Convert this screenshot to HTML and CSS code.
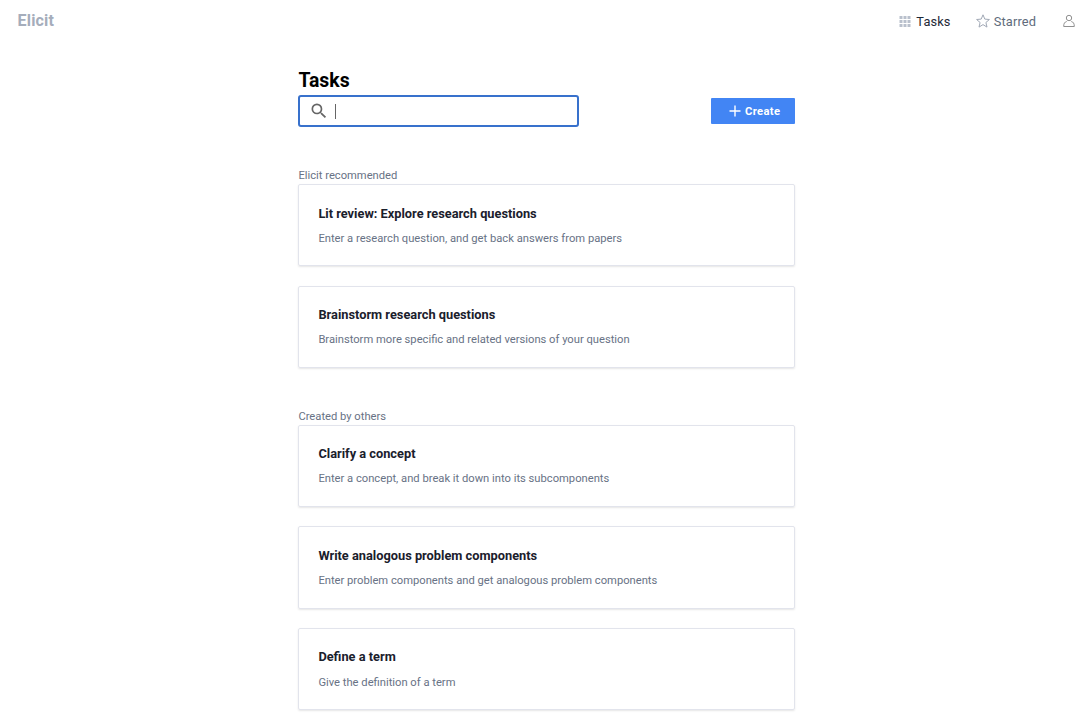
FILE: index.html
```html
<!DOCTYPE html>
<html lang="en">
<head>
<meta charset="utf-8">
<title>Elicit</title>
<link rel="stylesheet" href="styles.css">
</head>
<body>
<header class="topbar">
  <a class="brand">Elicit</a>
  <nav class="nav">
    <a class="nav-item active"><svg class="grid-icon" viewBox="0 0 12 12"><path d="M.5 1h3v3h-3zM4.500 1h3v3h-3zM8.500 1h3v3h-3zM.5 5h3v3h-3zM4.500 5h3v3h-3zM8.500 5h3v3h-3zM.5 9h3v3h-3zM4.500 9h3v3h-3zM8.500 9h3v3h-3z"/></svg><span>Tasks</span></a>
    <a class="nav-item starred"><svg class="star-icon" viewBox="0 0 14 14"><path d="M7 .8l1.800 4.300 4.600.4-3.500 3 1.100 4.600L7 10.600l-4 2.500 1.100-4.600-3.500-3 4.600-.4z"/></svg><span>Starred</span></a>
    <a class="nav-item user"><svg class="user-icon" viewBox="0 0 12 14"><circle cx="6" cy="4" r="2.700"/><path d="M3.700 7.500C1.600 8 .7 9.500.7 12.500h10.600c0-3-.9-4.500-3-5"/></svg></a>
  </nav>
</header>
<main class="content">
  <h1 class="title">Tasks</h1>
  <div class="toolbar">
    <div class="search"><svg class="search-icon" viewBox="0 0 24 24"><path d="M15.500 14h-.79l-.28-.27A6.471 6.471 0 0 0 16 9.500 6.500 6.500 0 1 0 9.500 16c1.610 0 3.090-.59 4.230-1.570l.27.28v.79l5 4.990L20.490 19l-4.990-5zm-6 0C7.010 14 5 11.990 5 9.500S7.010 5 9.500 5 14 7.010 14 9.500 11.990 14 9.500 14z"/></svg><span class="caret"></span></div>
    <button class="create"><svg class="plus-icon" viewBox="0 0 12 12"><path d="M6 .5v11M.5 6h11"/></svg><span>Create</span></button>
  </div>
  <section class="group">
    <h2 class="label">Elicit recommended</h2>
    <article class="card"><h3>Lit review: Explore research questions</h3><p>Enter a research question, and get back answers from papers</p></article>
    <article class="card"><h3>Brainstorm research questions</h3><p>Brainstorm more specific and related versions of your question</p></article>
  </section>
  <section class="group others">
    <h2 class="label">Created by others</h2>
    <article class="card"><h3>Clarify a concept</h3><p>Enter a concept, and break it down into its subcomponents</p></article>
    <article class="card"><h3>Write analogous problem components</h3><p>Enter problem components and get analogous problem components</p></article>
    <article class="card"><h3>Define a term</h3><p>Give the definition of a term</p></article>
  </section>
</main>
</body>
</html>
```
FILE: styles.css
```css
* { box-sizing: border-box; }
body { margin: 0; height: 721px; overflow: hidden; background: #fff; color: #1a202c; font-family: Roboto, sans-serif; }
h1, h2, h3, p { margin: 0; }
svg { display: block; flex: none; }
.topbar { height: 42px; padding: 0 13px 0 17.600px; display: flex; justify-content: space-between; }
.brand { font-size: 16px; letter-spacing: .15px; line-height: 42px; font-weight: 700; color: #a5adbb; }
.nav { display: flex; line-height: 43px; font-size: 12.800px; letter-spacing: .12px; font-weight: 400; }
.nav-item { display: flex; align-items: center; color: #606b7c; }
.nav-item.active { color: #1f2937; }
.grid-icon { width: 12px; height: 12px; margin-right: 5.500px; fill: #b9c0cc; }
.starred { margin-left: 25.300px; }
.star-icon { width: 14px; height: 14px; margin-right: 4px; }
.user { margin-left: 27px; }
.user-icon { width: 12px; height: 14px; }
.star-icon, .user-icon { fill: none; stroke: #a0a8b5; stroke-width: 1; }
.user-icon { stroke: #909090; }
.content { width: 496.600px; margin-left: 298.400px; padding-top: 25.500px; }
.title { font-size: 19.400px; line-height: 25px; font-weight: 700; color: #000; }
.toolbar { display: flex; justify-content: space-between; align-items: center; margin-top: 2.500px; height: 32px; }
.search { width: 280.400px; height: 32px; border: 2px solid #3871cc; border-radius: 3px; display: flex; align-items: center; padding-left: 9px; }
.search-icon { width: 20px; height: 20px; fill: #666; }
.caret { width: 1px; height: 15px; margin-left: 6px; background: #666; }
.create { width: 83.500px; height: 26px; border: 0; border-radius: 1px; padding: 0 0 0 3px; display: flex; align-items: center; justify-content: center; background: #4285f4; color: #fff; font: 700 11.200px Roboto, sans-serif; letter-spacing: .35px; }
.plus-icon { width: 12px; height: 12px; margin-right: 4px; stroke: #fff; stroke-width: 1.400; }
.group { margin-top: 40px; }
.others { margin-top: 39.500px; }
.label { font-size: 11.200px; line-height: 17px; font-weight: 400; color: #687285; }
.card { height: 82.400px; border: 1px solid #e2e4ec; border-radius: 2px; padding: 19.500px 19px; box-shadow: 0 1px 2px rgba(0,0,0,.1); }
.card + .card { margin-top: 19.300px; }
.card h3 { font-size: 12.800px; line-height: 17px; font-weight: 700; }
.card p { margin-top: 9.200px; font-size: 11.200px; line-height: 16px; color: #687285; }
```
